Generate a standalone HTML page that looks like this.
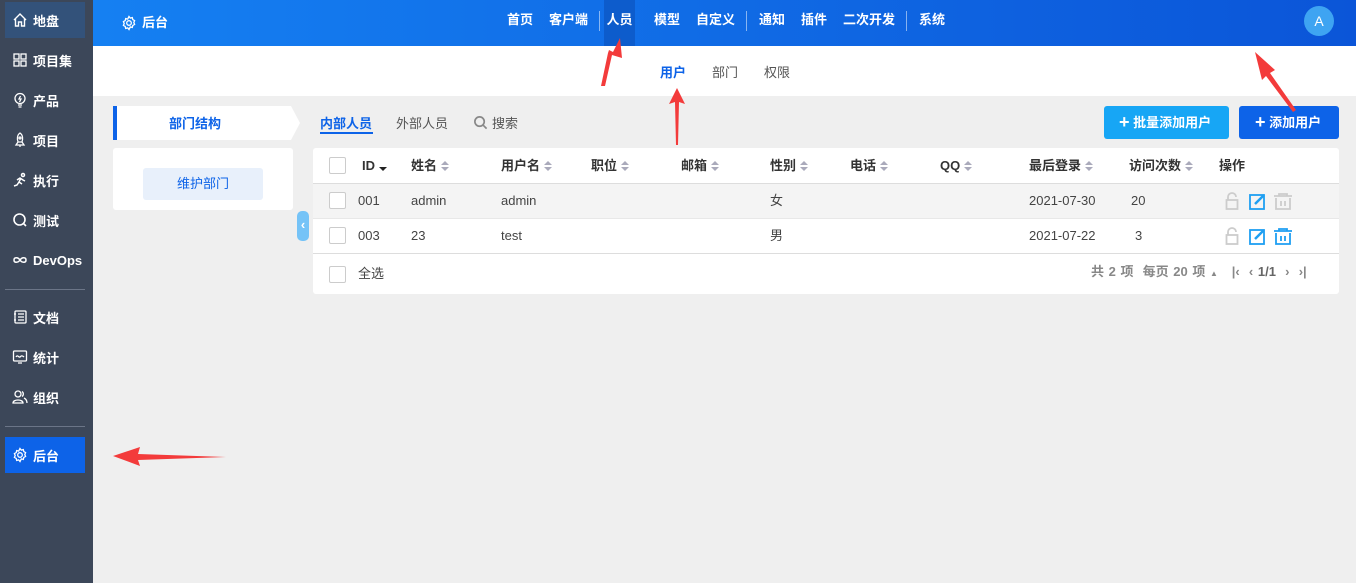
<!DOCTYPE html><html><head><meta charset="utf-8"><style>
*{margin:0;padding:0;box-sizing:border-box}
body{width:1356px;height:583px;overflow:hidden;font-family:"Liberation Sans","Noto Sans CJK SC",sans-serif;font-size:13px;background:#efefef;position:relative;color:#333}
.abs{position:absolute}
#side{left:0;top:0;width:93px;height:583px;background:#3c4759}
.si{position:absolute;left:5px;width:80px;height:36px;color:#fff;font-weight:bold;font-size:13px;display:flex;align-items:center;padding-left:7px;gap:5px}
.si svg{width:16px;height:16px}
#top{left:93px;top:0;width:1263px;height:46px;background:linear-gradient(90deg,#1580f2,#0b55d8)}
.nv{position:absolute;top:0;height:46px;line-height:40px;color:#fff;font-weight:bold;font-size:13px}
.sep{position:absolute;top:11px;width:1px;height:20px;background:rgba(255,255,255,.5)}
#sub{left:93px;top:46px;width:1263px;height:50px;background:#fff}
.th{position:absolute;top:0;line-height:35px;font-weight:bold;color:#333;display:flex;align-items:center;height:35px}
.so{margin-left:4px}
.cb{position:absolute;left:16px;width:17px;height:17px;border:1px solid #ccc;border-radius:2px;background:#fff}
.td{position:absolute;line-height:35px;color:#444}
</style></head><body>
<svg width="0" height="0" style="position:absolute"><defs><g id="srt"><path d="M0 5L4 1 8 5z" fill="#aab"/><path d="M0 7L4 11 8 7z" fill="#aab"/></g></defs></svg>
<div id="side" class="abs">
<div class="si" style="top:2px;background:#33527a"><svg viewBox="0 0 16 16" fill="none" stroke="#fff" stroke-width="1.4"><path d="M2 8L8 2l6 6M3.5 7v7h3v-4h3v4h3V7"/></svg>地盘</div>
<div class="si" style="top:42px"><svg viewBox="0 0 16 16" fill="none" stroke="#fff" stroke-width="1.3"><rect x="2" y="2" width="5" height="5"/><rect x="9" y="2" width="5" height="5"/><rect x="2" y="9" width="5" height="5"/><rect x="9" y="9" width="5" height="5"/></svg>项目集</div>
<div class="si" style="top:82px"><svg viewBox="0 0 16 16" fill="none" stroke="#fff" stroke-width="1.3"><circle cx="8" cy="6.5" r="5"/><path d="M6 13h4M6.5 15h3M8.5 4L7 7h2l-1.5 3"/></svg>产品</div>
<div class="si" style="top:122px"><svg viewBox="0 0 16 16" fill="none" stroke="#fff" stroke-width="1.3"><path d="M8 1c3 2 3 6 2 9H6C5 7 5 3 8 1zM6 10l-2 3h8l-2-3M8 13v2"/><circle cx="8" cy="6" r="1"/></svg>项目</div>
<div class="si" style="top:162px"><svg viewBox="0 0 16 16" fill="none" stroke="#fff" stroke-width="1.5"><circle cx="11" cy="3" r="1.5"/><path d="M2 14l3-1 2-3 3 2M5 8l3-2 3 2 2 1M7 10l2-4"/></svg>执行</div>
<div class="si" style="top:202px"><svg viewBox="0 0 16 16" fill="none" stroke="#fff" stroke-width="1.6"><circle cx="7.5" cy="7.5" r="5.5"/><path d="M11.5 11.5L14 14"/></svg>测试</div>
<div class="si" style="top:242px"><svg viewBox="0 0 16 16" fill="none" stroke="#fff" stroke-width="1.5"><path d="M8 8c-2-3-6-3-6 0s4 3 6 0 6-3 6 0-4 3-6 0"/></svg>DevOps</div>
<div class="abs" style="left:5px;top:289px;width:80px;height:1px;background:#6b7587"></div>
<div class="si" style="top:299px"><svg viewBox="0 0 16 16" fill="none" stroke="#fff" stroke-width="1.3"><rect x="3" y="2" width="11" height="12" rx="1"/><path d="M6 5h6M6 8h6M6 11h6M2 5h2M2 11h2"/></svg>文档</div>
<div class="si" style="top:339px"><svg viewBox="0 0 16 16" fill="none" stroke="#fff" stroke-width="1.3"><rect x="1.5" y="2" width="13" height="10" rx="1"/><path d="M4 8c1.5-3 3 1 4 0s2-2 4 0M6 14h4"/></svg>统计</div>
<div class="si" style="top:379px"><svg viewBox="0 0 16 16" fill="none" stroke="#fff" stroke-width="1.3"><circle cx="6" cy="5" r="3"/><path d="M1 14c0-4 10-4 10 0zM10 2.5a3 3 0 010 5M12 9c2 1 3 3 3 5"/></svg>组织</div>
<div class="abs" style="left:5px;top:426px;width:80px;height:1px;background:#6b7587"></div>
<div class="si" style="top:437px;background:#0d63e8"><svg viewBox="0 0 16 16" fill="none" stroke="#fff" stroke-width="1.3"><circle cx="8" cy="8" r="2.3"/><path d="M8 1.5l1.3 1.6 2-.5.5 2 1.8 1-.8 1.9.8 1.9-1.8 1-.5 2-2-.5L8 14.5l-1.3-1.6-2 .5-.5-2-1.8-1 .8-1.9-.8-1.9 1.8-1 .5-2 2 .5z"/></svg>后台</div>
</div>
<div id="top" class="abs">
<div class="nv" style="left:28px;display:flex;align-items:center;gap:5px"><svg width="16" height="16" viewBox="0 0 16 16" fill="none" stroke="#fff" stroke-width="1.3"><circle cx="8" cy="8" r="2.3"/><path d="M8 1.5l1.3 1.6 2-.5.5 2 1.8 1-.8 1.9.8 1.9-1.8 1-.5 2-2-.5L8 14.5l-1.3-1.6-2 .5-.5-2-1.8-1 .8-1.9-.8-1.9 1.8-1 .5-2 2 .5z"/></svg>后台</div>
<div class="nv" style="left:414px">首页</div>
<div class="nv" style="left:456px">客户端</div>
<div class="sep" style="left:506px"></div>
<div class="nv" style="left:511px;width:31px;background:#0d5ccc;text-align:center">人员</div>
<div class="nv" style="left:561px">模型</div>
<div class="nv" style="left:603px">自定义</div>
<div class="sep" style="left:653px"></div>
<div class="nv" style="left:666px">通知</div>
<div class="nv" style="left:708px">插件</div>
<div class="nv" style="left:750px">二次开发</div>
<div class="sep" style="left:813px"></div>
<div class="nv" style="left:826px">系统</div>
<div class="abs" style="left:1211px;top:6px;width:30px;height:30px;border-radius:50%;background:#3ea4f2;color:#fff;text-align:center;line-height:30px;font-size:14px">A</div>
</div>
<div id="sub" class="abs">
<div class="abs" style="left:567px;top:16px;color:#0d63e8;font-weight:bold">用户</div>
<div class="abs" style="left:619px;top:16px;color:#555">部门</div>
<div class="abs" style="left:671px;top:16px;color:#555">权限</div>
</div>
<svg class="abs" style="left:113px;top:106px" width="188" height="34"><polygon points="0,0 178,0 187,17 178,34 0,34" fill="#fff"/><rect width="4" height="34" fill="#0d63e8"/><text x="82" y="22" font-size="13" font-weight="bold" fill="#0d63e8" text-anchor="middle" font-family="Liberation Sans,Noto Sans CJK SC,sans-serif">部门结构</text></svg>
<div class="abs" style="left:113px;top:148px;width:180px;height:62px;background:#fff;border-radius:3px"><div class="abs" style="left:30px;top:20px;width:120px;height:32px;background:#e8f0fb;border-radius:3px;color:#0d63e8;text-align:center;line-height:32px">维护部门</div></div>
<div class="abs" style="left:297px;top:211px;width:12px;height:30px;background:#75c3f7;border-radius:5px;color:#fff;font-weight:bold;text-align:center;line-height:28px;font-size:13px">‹</div>
<div class="abs" style="left:320px;top:113px;color:#0d63e8;font-weight:bold">内部人员</div>
<div class="abs" style="left:320px;top:132px;width:53px;height:2px;background:#0d63e8"></div>
<div class="abs" style="left:396px;top:113px;color:#555">外部人员</div>
<div class="abs" style="left:473px;top:113px;color:#555;display:flex;gap:4px;align-items:center"><svg width="15" height="15" viewBox="0 0 16 16" fill="none" stroke="#888" stroke-width="1.8"><circle cx="7" cy="7" r="5"/><path d="M11 11l3.5 3.5"/></svg>搜索</div>
<div class="abs" style="left:1104px;top:106px;width:125px;height:33px;background:#17a6f5;border-radius:3px;color:#fff;font-weight:bold;line-height:33px;padding-left:15px"><span style="font-size:18px;vertical-align:-1px">+</span>&nbsp;批量添加用户</div>
<div class="abs" style="left:1239px;top:106px;width:100px;height:33px;background:#0d63e8;border-radius:3px;color:#fff;font-weight:bold;line-height:33px;padding-left:16px"><span style="font-size:18px;vertical-align:-1px">+</span>&nbsp;添加用户</div>
<div class="abs" style="left:313px;top:148px;width:1026px;height:146px;background:#fff;border-radius:3px">
<div class="abs" style="left:0;top:35px;width:1026px;height:1px;background:#ddd"></div>
<div class="abs" style="left:0;top:36px;width:1026px;height:34px;background:#f4f4f4"></div>
<div class="abs" style="left:0;top:70px;width:1026px;height:1px;background:#e8e8e8"></div>
<div class="abs" style="left:0;top:105px;width:1026px;height:1px;background:#ddd"></div>
<div class="cb" style="top:9px"></div><div class="cb" style="top:44px"></div><div class="cb" style="top:79px"></div><div class="cb" style="top:118px"></div>
<div class="th" style="left:49px">ID<svg class="so" width="8" height="12"><path d="M0 5L4 1 8 5z" fill="#fff"/><path d="M0 7L4 11 8 7z" fill="#222"/></svg></div>
<div class="th" style="left:98px">姓名<svg class="so" width="8" height="12"><use href="#srt"/></svg></div>
<div class="th" style="left:188px">用户名<svg class="so" width="8" height="12"><use href="#srt"/></svg></div>
<div class="th" style="left:278px">职位<svg class="so" width="8" height="12"><use href="#srt"/></svg></div>
<div class="th" style="left:368px">邮箱<svg class="so" width="8" height="12"><use href="#srt"/></svg></div>
<div class="th" style="left:457px">性别<svg class="so" width="8" height="12"><use href="#srt"/></svg></div>
<div class="th" style="left:537px">电话<svg class="so" width="8" height="12"><use href="#srt"/></svg></div>
<div class="th" style="left:627px">QQ<svg class="so" width="8" height="12"><use href="#srt"/></svg></div>
<div class="th" style="left:716px">最后登录<svg class="so" width="8" height="12"><use href="#srt"/></svg></div>
<div class="th" style="left:816px">访问次数<svg class="so" width="8" height="12"><use href="#srt"/></svg></div>
<div class="th" style="left:906px">操作</div>
<div class="td" style="top:35px;left:45px">001</div><div class="td" style="top:35px;left:98px">admin</div><div class="td" style="top:35px;left:188px">admin</div><div class="td" style="top:35px;left:457px">女</div><div class="td" style="top:35px;left:716px">2021-07-30</div><div class="td" style="top:35px;left:818px">20</div>
<div class="td" style="top:70px;left:45px">003</div><div class="td" style="top:70px;left:98px">23</div><div class="td" style="top:70px;left:188px">test</div><div class="td" style="top:70px;left:457px">男</div><div class="td" style="top:70px;left:716px">2021-07-22</div><div class="td" style="top:70px;left:822px">3</div>
<svg class="abs" style="left:912px;top:43px" width="84" height="20"><g fill="none" stroke-width="1.8"><path d="M3 9V6a4 4 0 018 0" stroke="#ccc"/><rect x="1.5" y="9" width="11" height="9" stroke="#ccc"/><rect x="25" y="4" width="14" height="14" stroke="#1e9ff2"/><path d="M30 13l9-9" stroke="#1e9ff2" stroke-width="2.5"/><path d="M49 5h18M54 5V3h8v2M51 7v11h14V7M56 10v5M60 10v5" stroke="#ccc"/></g></svg>
<svg class="abs" style="left:912px;top:78px" width="84" height="20"><g fill="none" stroke-width="1.8"><path d="M3 9V6a4 4 0 018 0" stroke="#ccc"/><rect x="1.5" y="9" width="11" height="9" stroke="#ccc"/><rect x="25" y="4" width="14" height="14" stroke="#1e9ff2"/><path d="M30 13l9-9" stroke="#1e9ff2" stroke-width="2.5"/><path d="M49 5h18M54 5V3h8v2M51 7v11h14V7M56 10v5M60 10v5" stroke="#1e9ff2"/></g></svg>
<div class="td" style="top:108px;left:45px">全选</div>
<div class="td" style="top:106px;left:778px;color:#888;font-weight:bold;font-size:13px;word-spacing:1px">共 2 项 &nbsp;每页 20 项 <span style="font-size:8px">▲</span> &nbsp; |‹ &nbsp;‹ <span style="color:#666">1/1</span> &nbsp;› &nbsp;›|</div>
</div>
<svg class="abs" style="left:0;top:0" width="1356" height="583"><g fill="#f33b3b">
<polygon points="620,38 622,58 612,55 605,86 601,86 608,53 609,50 613,52"/>
<polygon points="677,88 685,104 679,102 678,145 676,145 675,102 669,104"/>
<polygon points="1255,52 1275,70 1270,73 1296,110 1293,112 1266,76 1262,80"/>
<polygon points="113,456 140,447 138,454 226,457 138,460 140,466"/>
</g></svg>
</body></html>
